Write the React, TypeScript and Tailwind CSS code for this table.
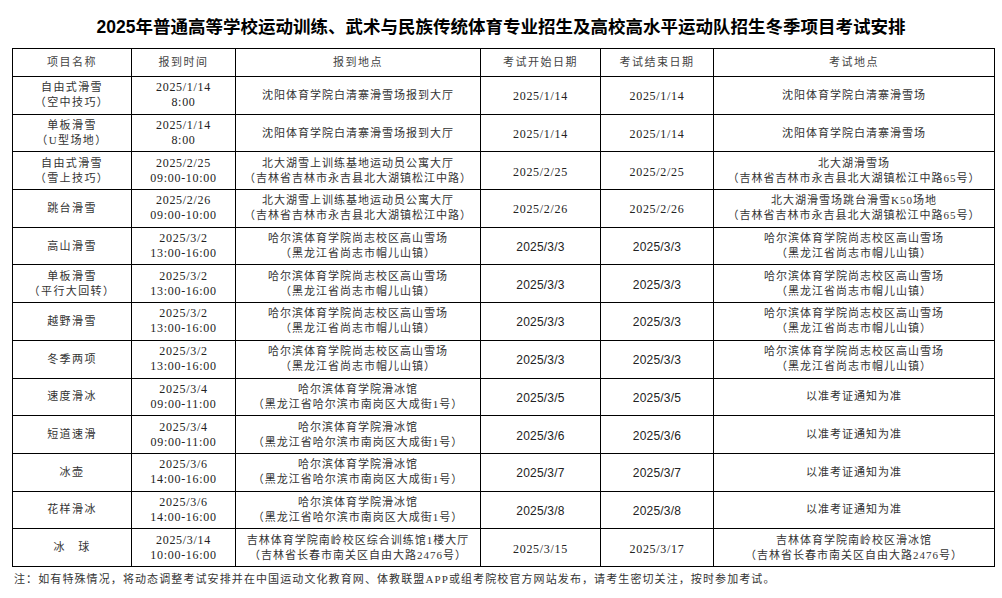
const HEB = ['哈尔滨体育学院尚志校区高山雪场', '（黑龙江省尚志市帽儿山镇）']
const HRB_ICE = ['哈尔滨体育学院滑冰馆', '（黑龙江省哈尔滨市南岗区大成街1号）']
const BDH = ['北大湖雪上训练基地运动员公寓大厅', '（吉林省吉林市永吉县北大湖镇松江中路）']
const SY = ['沈阳体育学院白清寨滑雪场报到大厅']
const SY_SITE = ['沈阳体育学院白清寨滑雪场']
const TBD = ['以准考证通知为准']

type Row = {
  name: string[]
  time: string[]
  place: string[]
  start: string
  end: string
  site: string[]
  sans?: boolean
}

const rows: Row[] = [
  { name: ['自由式滑雪', '（空中技巧）'], time: ['2025/1/14', '8:00'], place: SY, start: '2025/1/14', end: '2025/1/14', site: SY_SITE },
  { name: ['单板滑雪', '（U型场地）'], time: ['2025/1/14', '8:00'], place: SY, start: '2025/1/14', end: '2025/1/14', site: SY_SITE },
  {
    name: ['自由式滑雪', '（雪上技巧）'],
    time: ['2025/2/25', '09:00-10:00'],
    place: BDH,
    start: '2025/2/25',
    end: '2025/2/25',
    site: ['北大湖滑雪场', '（吉林省吉林市永吉县北大湖镇松江中路65号）'],
  },
  {
    name: ['跳台滑雪'],
    time: ['2025/2/26', '09:00-10:00'],
    place: BDH,
    start: '2025/2/26',
    end: '2025/2/26',
    site: ['北大湖滑雪场跳台滑雪K50场地', '（吉林省吉林市永吉县北大湖镇松江中路65号）'],
  },
  { name: ['高山滑雪'], time: ['2025/3/2', '13:00-16:00'], place: HEB, start: '2025/3/3', end: '2025/3/3', site: HEB, sans: true },
  { name: ['单板滑雪', '（平行大回转）'], time: ['2025/3/2', '13:00-16:00'], place: HEB, start: '2025/3/3', end: '2025/3/3', site: HEB, sans: true },
  { name: ['越野滑雪'], time: ['2025/3/2', '13:00-16:00'], place: HEB, start: '2025/3/3', end: '2025/3/3', site: HEB, sans: true },
  { name: ['冬季两项'], time: ['2025/3/2', '13:00-16:00'], place: HEB, start: '2025/3/3', end: '2025/3/3', site: HEB, sans: true },
  { name: ['速度滑冰'], time: ['2025/3/4', '09:00-11:00'], place: HRB_ICE, start: '2025/3/5', end: '2025/3/5', site: TBD, sans: true },
  { name: ['短道速滑'], time: ['2025/3/4', '09:00-11:00'], place: HRB_ICE, start: '2025/3/6', end: '2025/3/6', site: TBD, sans: true },
  { name: ['冰壶'], time: ['2025/3/6', '14:00-16:00'], place: HRB_ICE, start: '2025/3/7', end: '2025/3/7', site: TBD, sans: true },
  { name: ['花样滑冰'], time: ['2025/3/6', '14:00-16:00'], place: HRB_ICE, start: '2025/3/8', end: '2025/3/8', site: TBD, sans: true },
  {
    name: ['冰　球'],
    time: ['2025/3/14', '10:00-16:00'],
    place: ['吉林体育学院南岭校区综合训练馆1楼大厅', '（吉林省长春市南关区自由大路2476号）'],
    start: '2025/3/15',
    end: '2025/3/17',
    site: ['吉林体育学院南岭校区滑冰馆', '（吉林省长春市南关区自由大路2476号）'],
  },
]

const headers = ['项目名称', '报到时间', '报到地点', '考试开始日期', '考试结束日期', '考试地点']
const widths = ['w-[119px]', 'w-[104px]', 'w-[245px]', 'w-[120px]', 'w-[113px]', 'w-[281px]']

function Lines({ lines }: { lines: string[] }) {
  return (
    <>
      {lines.map((l, i) => (
        <div key={i} className="whitespace-nowrap">
          {l}
        </div>
      ))}
    </>
  )
}

const cell = 'border border-black p-0 text-center align-middle'

function DateCell({ value, sans }: { value: string; sans?: boolean }) {
  return (
    <td className={cell}>
      {sans ? (
        <span className="font-['Liberation_Sans',sans-serif] text-[12px] tracking-[0.2px] text-[#222]">{value}</span>
      ) : (
        <span className="text-[12px] tracking-[0.7px] text-[#222]">{value}</span>
      )}
    </td>
  )
}

export default function App() {
  return (
    <div className="w-[1002px] h-[598px] bg-white overflow-hidden font-['Liberation_Serif','Noto_Sans_CJK_SC',serif] text-[#333]">
      <h1 className="pt-[15px] mb-[9px] text-center text-[17.5px] leading-[24px] font-bold text-black font-['Liberation_Sans','Noto_Sans_CJK_SC',sans-serif]">
        2025年普通高等学校运动训练、武术与民族传统体育专业招生及高校高水平运动队招生冬季项目考试安排
      </h1>
      <table className="ml-[12px] w-[982px] table-fixed border-collapse">
        <thead>
          <tr className="h-[28px]">
            {headers.map((h, i) => (
              <th key={h} className={`${cell} ${widths[i]} font-normal text-[11px] tracking-[1.5px] text-[#444]`}>
                {h}
              </th>
            ))}
          </tr>
        </thead>
        <tbody>
          {rows.map((r, i) => (
            <tr key={i} className="h-[37.7px]">
              <td className={`${cell} text-[11px] tracking-[1.4px] leading-[15px]`}>
                <Lines lines={r.name} />
              </td>
              <td className={`${cell} text-[12px] tracking-[0.7px] leading-[15px] text-[#222]`}>
                <Lines lines={r.time} />
              </td>
              <td className={`${cell} text-[11px] tracking-[1px] leading-[15px]`}>
                <Lines lines={r.place} />
              </td>
              <DateCell value={r.start} sans={r.sans} />
              <DateCell value={r.end} sans={r.sans} />
              <td className={`${cell} text-[11px] tracking-[1px] leading-[15px]`}>
                <Lines lines={r.site} />
              </td>
            </tr>
          ))}
        </tbody>
      </table>
      <p className="mt-[5px] pl-[14px] text-[11px] leading-[14px] tracking-[1.1px] whitespace-nowrap text-[#333]">
        注：如有特殊情况，将动态调整考试安排并在中国运动文化教育网、体教联盟APP或组考院校官方网站发布，请考生密切关注，按时参加考试。
      </p>
    </div>
  )
}
